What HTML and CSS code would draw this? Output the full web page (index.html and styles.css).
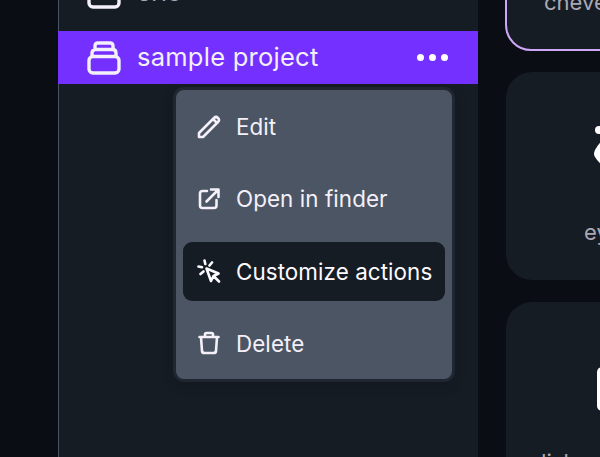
FILE: index.html
```html
<!DOCTYPE html>
<html lang="en">
<head>
<meta charset="utf-8">
<title>Projects</title>
<link rel="stylesheet" href="styles.css">
</head>
<body>
<div class="app">
  <aside class="sidebar">
    <div class="project previous">
      <svg class="stack" viewBox="0 0 34 34"><rect x="2" y="15.500" width="30" height="16.500" rx="4"/><path d="M5 15V12q0-3.500 3.500-3.500h17q3.500 0 3.500 3.500v3M8 8V5q0-3 3-3h12q3 0 3 3v3"/></svg>
      <span class="name">eric</span>
    </div>
    <div class="project active">
      <svg class="stack" viewBox="0 0 34 34"><rect x="2" y="15.500" width="30" height="16.500" rx="4"/><path d="M5 15V12q0-3.500 3.500-3.500h17q3.500 0 3.500 3.500v3M8 8V5q0-3 3-3h12q3 0 3 3v3"/></svg>
      <span class="name">sample project</span>
      <span class="dots"><i></i><i></i><i></i></span>
    </div>
    <nav class="menu">
      <div class="item"><svg class="icon" viewBox="0 0 24 24"><path d="M2 22v-4L17 3q2-2 4 0t0 4L6 22zM16 4l4 4"/></svg><span>Edit</span></div>
      <div class="item"><svg class="icon" viewBox="0 0 24 24"><path d="M10 4H5.500Q3 4 3 6.500v12Q3 21 5.500 21h11.500q2.500 0 2.500-2.500V13M14 2.500h7.500V10M21 3L9.500 14.500"/></svg><span>Open in finder</span></div>
      <div class="item selected"><svg class="icon" viewBox="0 0 24 24"><path d="M9.500 9.500l4.500 12.500 2.500-5 5-2.500zM16.500 17l5.500 5.500M7.500 1.500l.8 3.500M1.500 7.500l3.500.8M15 3.500l-2.500 3M3.500 15l3-2.500"/></svg><span>Customize actions</span></div>
      <div class="item"><svg class="icon" viewBox="0 0 24 24"><path d="M2.500 6h19M4 6l1 14q.2 2 2.500 2h9q2.300 0 2.500-2l1-14M8 6V3.500Q8 2 9.500 2h5Q16 2 16 3.500V6"/></svg><span>Delete</span></div>
    </nav>
  </aside>
  <main class="cards">
    <article class="card chosen"><span class="label">cheve</span></article>
    <article class="card"><svg class="art" viewBox="0 0 10 44"><circle cx="6" cy="5" r="4"/><path d="M10 15Q6 18 2 25q-2 4 0 7 3 5 8 9z"/></svg><span class="label eye">ey</span></article>
    <article class="card last"><div class="tile"></div><span class="label disk">disk</span></article>
  </main>
</div>
</body>
</html>
```
FILE: styles.css
```css
* { box-sizing: border-box; }
body { margin: 0; overflow: hidden; background: #0a0d14; color: #f3f0fa; font-family: Inter, sans-serif; }
.app { display: flex; width: 600px; height: 457px; overflow: hidden; padding-left: 58px; }
svg { flex: none; fill: none; stroke: currentColor; stroke-width: 2.600; stroke-linecap: round; stroke-linejoin: round; }
.sidebar { position: relative; flex: none; width: 420px; border-left: 1px solid #4b5563; background: #161c24; }
.project { display: flex; align-items: center; height: 53px; padding: 0 30px 0 28px; }
.previous { margin-top: -35px; margin-bottom: 13px; }
.previous .name { margin-top: 3px; color: #aaa9b5; font-size: 24px; }
.active { margin-left: -1px; padding-left: 29px; background: #7330ff; }
.stack { width: 34px; height: 34px; stroke-width: 3.400; }
.name { margin-left: 16px; margin-top: -2px; font-size: 25.500px; line-height: 32px; white-space: nowrap; letter-spacing: .25px; }
.dots { display: flex; gap: 5px; margin-left: auto; }
.dots i { width: 7px; height: 7px; border-radius: 50%; background: #fff; }
.menu { position: absolute; left: 114px; top: 87px; width: 282px; height: 295px; display: flex; flex-direction: column; gap: 13.300px; padding: 7px 7px; border: 3px solid #202732; border-radius: 11px; background: #4c5563; box-shadow: 0 4px 12px #0b101633; }
.item { display: flex; align-items: center; flex: none; height: 59px; padding-left: 14px; border-radius: 9px; font-size: 22.400px; letter-spacing: .08px; white-space: nowrap; }
.item.selected { background: #161c24; color: #fcfaff; }
.icon { width: 24px; height: 24px; margin-right: 15px; }
.cards { display: flex; flex-direction: column; flex: none; gap: 22px; width: 230px; padding-left: 28px; }
.card { flex: none; width: 230px; height: 208px; border-radius: 26px; background: #161c24; overflow: hidden; }
.chosen { display: flex; flex-direction: column; justify-content: flex-end; width: 232px; margin: -159px 0 -1px -1px; height: 210px; border: 2px solid #cda6f5; padding: 0 0 33px 37px; }
.label { display: block; font-size: 22px; line-height: 28px; color: #aaa9b5; white-space: nowrap; }
.art { display: block; width: 10px; height: 44px; margin: 53px 0 0 87px; fill: #fff; stroke: none; }
.eye { margin: 49px 0 0 78px; }
.tile { width: 60px; height: 44px; margin: 65px 0 0 91px; border-radius: 5px; background: #fff; }
.disk { margin: 37px 0 0 27px; }
```
